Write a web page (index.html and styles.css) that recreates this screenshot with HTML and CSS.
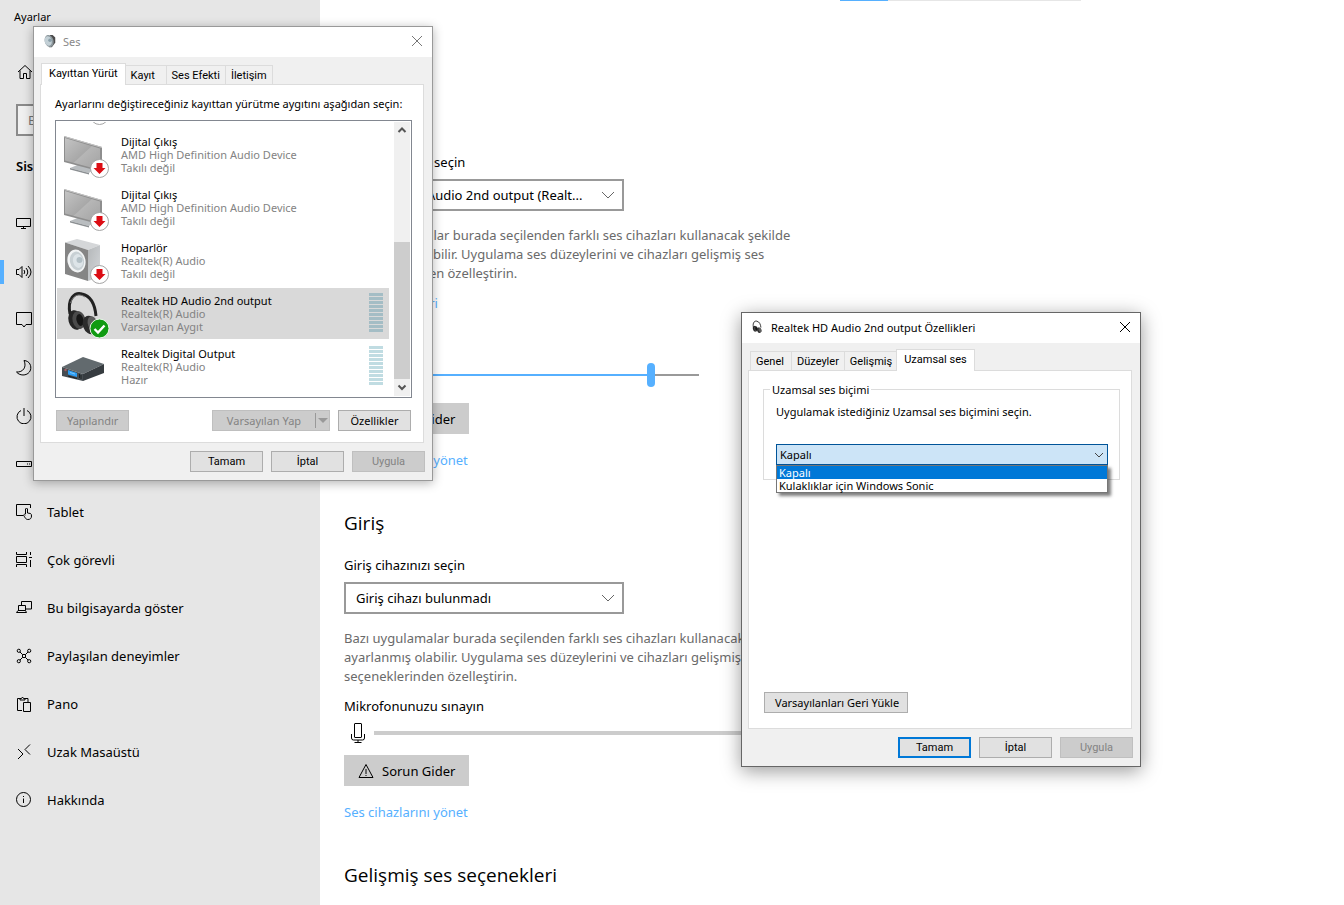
FILE: index.html
```html
<!DOCTYPE html>
<html lang="tr">
<head>
    <meta charset="UTF-8">
    <meta name="viewport" content="width=device-width, initial-scale=1.0">
    <title>Ayarlar</title>
    <link rel="stylesheet" href="styles.css">
</head>
<body>
    <!-- shared device pictures -->
    <svg class="defs" aria-hidden="true">
        <defs>
            <linearGradient id="screen" x1="0" y1="0" x2="1" y2="1">
                <stop offset="0" stop-color="#c4c4c4"/>
                <stop offset="0.5" stop-color="#a8a8a8"/>
                <stop offset="0.52" stop-color="#b6b6b6"/>
                <stop offset="1" stop-color="#a2a2a2"/>
            </linearGradient>
            <linearGradient id="side" x1="0" y1="0" x2="1" y2="1">
                <stop offset="0" stop-color="#b4b7b9"/>
                <stop offset="1" stop-color="#d4d7da"/>
            </linearGradient>
            <symbol id="badge" viewBox="0 0 48 48">
                <circle cx="37.500" cy="37.500" r="9" fill="#fff" stroke="#a5a5a5"/>
                <path d="M34.500 32h6v5h3l-6 6-6-6h3z" fill="#dc0d14"/>
            </symbol>
            <symbol id="monitor" viewBox="0 0 48 48">
                <path d="M8 37l10-4 14 5-5 4z" fill="#b9bdc0"/>
                <path d="M8 37l19 5v1.500L8 38.500z" fill="#8b8f92"/>
                <path d="M2 5l38 11v25L2 31z" fill="#8e8e8e"/>
                <path d="M3 7l35 10.500V39L3 29.500z" fill="url(#screen)"/>
                <path d="M2 5l38 11v1L2 6z" fill="#c7c7c7"/>
            </symbol>
            <symbol id="speaker" viewBox="0 0 48 48">
                <path d="M3 5.500L15 2l23 6-12 5z" fill="#d5d7d9"/>
                <path d="M26 13l12-5v32l-12 4z" fill="url(#side)"/>
                <path d="M3 5.500L26 13v31L3 37z" fill="#858585"/>
                <ellipse cx="14.500" cy="24" rx="9" ry="11.500" transform="rotate(-12 14.500 24)" fill="#f2f4f5"/>
                <ellipse cx="15" cy="24" rx="7" ry="9.500" transform="rotate(-12 15 24)" fill="#c8d0d4"/>
                <ellipse cx="16" cy="24" rx="5" ry="7" transform="rotate(-12 16 24)" fill="#dde4e8"/>
                <circle cx="17.500" cy="23" r="3" fill="#b3c0c6"/>
            </symbol>
            <symbol id="headphones" viewBox="0 0 48 48">
                <path d="M8 24C5 8 13 2 20 4c9 2 13 11 14 22" fill="none" stroke="#222" stroke-width="3"/>
                <path d="M8.500 13C11 5 17 3 23 7" fill="none" stroke="#777" stroke-width="1"/>
                <ellipse cx="13.500" cy="30" rx="7" ry="10" transform="rotate(-14 13.500 30)" fill="#252525"/>
                <ellipse cx="17" cy="30" rx="6.500" ry="9" transform="rotate(-14 17 30)" fill="#4a4a4a"/>
                <ellipse cx="18" cy="30" rx="3.500" ry="6" transform="rotate(-14 18 30)" fill="#161616"/>
                <ellipse cx="28" cy="35" rx="7" ry="9.500" transform="rotate(-20 28 35)" fill="#2c2c2c"/>
                <ellipse cx="31" cy="34" rx="5" ry="8" transform="rotate(-20 31 34)" fill="#5d5d5d"/>
            </symbol>
            <symbol id="check" viewBox="0 0 48 48">
                <circle cx="37.500" cy="38.500" r="9.500" fill="#109b12" stroke="#e9f5e9"/>
                <path d="M32.500 39l3.500 3.500 6.500-7" fill="none" stroke="#fff" stroke-width="2.400"/>
            </symbol>
            <symbol id="amp" viewBox="0 -2 48 48">
                <path d="M0 22l21-10 21 7-21 10z" fill="#626a6e"/>
                <path d="M0 22l21 7v7L0 31z" fill="#454c51"/>
                <path d="M21 29l21-10v9l-21 8z" fill="#363c40"/>
                <path d="M6 25l9 3v4l-9-2.500z" fill="#2b9df4"/>
                <path d="M8 27l5 1.500v1L8 28z" fill="#7cc6fb"/>
                <circle cx="3.500" cy="25" r="1.200" fill="#a35b62"/>
                <path d="M6 31l9 2.500M17.500 29v4M19 30v4" stroke="#1c2023"/>
            </symbol>
        </defs>
    </svg>

    <div class="settings">
        <nav class="sidebar">
            <div class="app-title">Ayarlar</div>
            <a class="home" href="#" aria-label="Giriş">
                <svg viewBox="0 0 16 16"><path d="M1 8L8 1.500 15 8M3 6.500V14.500H6.500V9.500H9.500V14.500H13V6.500"/></svg>
            </a>
            <input class="search" type="text" placeholder="Bir ayar bulun" aria-label="Bir ayar bulun">
            <h2 class="group">Sistem</h2>
            <ul class="menu">
                <li><a href="#">
                    <svg viewBox="0 0 16 16"><path d="M.500 2.500h14v8H.500zM7.500 10.500v2M5 12.500h5"/></svg>
                    Ekran</a></li>
                <li class="active"><a href="#">
                    <svg viewBox="0 0 16 16"><path d="M.500 5.500h2.500l3-3v11l-3-3H.500zM8 6q1.500 2 0 4M10 4q3.500 4 0 8M12 2q6 6 0 12"/></svg>
                    Ses</a></li>
                <li><a href="#">
                    <svg viewBox="0 0 16 16"><path d="M.500.500h15v12H10L8 15 6 12.500H.500z"/></svg>
                    Bildirimler ve eylemler</a></li>
                <li><a href="#">
                    <svg viewBox="0 0 16 16"><path d="M8 .500C14 1 15.500 6 14.500 10 12.500 16 4 16.500.500 12 7 12.500 11 7 8 .500z"/></svg>
                    Odaklanma yardımı</a></li>
                <li><a href="#">
                    <svg viewBox="0 0 16 16"><path d="M5 2.500a7 7 0 1 0 6 0M8 0v8"/></svg>
                    Güç ve uyku</a></li>
                <li><a href="#">
                    <svg viewBox="0 0 16 16"><path d="M.500 5.500h15v5H.500zM11 8h1M13 8h1"/></svg>
                    Depolama</a></li>
                <li><a href="#">
                    <svg viewBox="0 0 16 16"><path d="M7 11.500H.500V.500h14V4M9.500 10V5q1-2 2 0v4l3 .500q1 .500 1 2.500c0 2-1 3.500-3.500 3.500-2 0-2.500-1-4.500-4.500q1-1.500 2 0"/></svg>
                    Tablet</a></li>
                <li><a href="#">
                    <svg viewBox="0 0 16 16"><path d="M.500 0v2.500h10V0M.500 4.500h10v6H.500zM.500 15v-2.500h10V15M14.500 0v3M14.500 8v7M13 5.500h3"/></svg>
                    Çok görevli</a></li>
                <li><a href="#">
                    <svg viewBox="0 0 16 16"><path d="M5.500 5V1.500h10v7.500H10M2.500 10.500V5.500H9.500v5M.500 12.500L2 10.500h7.500l1 2z"/></svg>
                    Bu bilgisayarda göster</a></li>
                <li><a href="#">
                    <svg viewBox="0 0 16 16"><path d="M6.500 6.500h3v3h-3zM4 4l2.500 2.500M12 4L9.500 6.500M4 12l2.500-2.500M12 12L9.500 9.500"/><circle cx="2.800" cy="2.800" r="1.600"/><circle cx="13.200" cy="2.800" r="1.600"/><circle cx="2.800" cy="13.200" r="1.600"/><circle cx="13.200" cy="13.200" r="1.600"/></svg>
                    Paylaşılan deneyimler</a></li>
                <li><a href="#">
                    <svg viewBox="0 0 16 16"><path d="M6 14.500H1.500v-12H4M9 2.500h3V6M4 4V2.500H5.500q1-3 2 0H9V4zM7.500 6.500h7v9h-7z"/></svg>
                    Pano</a></li>
                <li><a href="#">
                    <svg viewBox="0 0 16 16"><path d="M2 5l5 5-5 5M14 .500l-5 5 5 5"/></svg>
                    Uzak Masaüstü</a></li>
                <li><a href="#">
                    <svg viewBox="0 0 16 16"><circle cx="7.500" cy="7.500" r="7"/><path d="M7.500 6.500V11M7.500 4v1"/></svg>
                    Hakkında</a></li>
            </ul>
        </nav>

        <main class="content">
            <div class="loading"><div class="loading-value"></div></div>
            <h1>Ses</h1>

            <h2>Çıkış</h2>
            <label class="label" for="output">Çıkış cihazınızı seçin</label>
            <div class="picker">
                <select id="output"><option>Realtek HD Audio 2nd output (Realt...</option></select>
                <svg viewBox="0 0 12 8"><path d="M0 1l6 6 6-6"/></svg>
            </div>
            <p class="hint">Bazı uygulamalar burada seçilenden farklı ses cihazları kullanacak şekilde ayarlanmış olabilir. Uygulama ses düzeylerini ve cihazları gelişmiş ses seçeneklerinden özelleştirin.</p>
            <a class="link device-link" href="#">Cihaz özellikleri</a>
            <label class="label volume-label" for="volume">Ana ses düzeyi</label>
            <div class="level">
                <svg viewBox="0 0 16 20"><path d="M.500 8h2.500l3-3v10l-3-3H.500zM8 8q1 2 0 4M10 6.500q3 3.500 0 7M12 5q4 5 0 10"/></svg>
                <input id="volume" class="volume" type="range" min="0" max="100" value="86">
            </div>
            <button class="fix" type="button">
                <svg viewBox="0 0 16 16"><path d="M8 1.500L15 14.500H1zM8 6v5M8 12v1"/></svg>
                Sorun Gider
            </button>
            <a class="link" href="#">Ses cihazlarını yönet</a>

            <h2>Giriş</h2>
            <label class="label" for="mic">Giriş cihazınızı seçin</label>
            <div class="picker">
                <select id="mic"><option>Giriş cihazı bulunmadı</option></select>
                <svg viewBox="0 0 12 8"><path d="M0 1l6 6 6-6"/></svg>
            </div>
            <p class="hint">Bazı uygulamalar burada seçilenden farklı ses cihazları kullanacak şekilde ayarlanmış olabilir. Uygulama ses düzeylerini ve cihazları gelişmiş ses seçeneklerinden özelleştirin.</p>
            <div class="label mic-label">Mikrofonunuzu sınayın</div>
            <div class="level">
                <svg class="mic" viewBox="0 0 16 20"><path d="M4.500 1q0-.500.500-.500h6q.500 0 .500.500v13q0 .500-.500.500H5q-.500 0-.500-.500zM1.500 11v4q0 2 2 2h9q2 0 2-2v-4M8 17v2.500M4.500 19.500h7"/></svg>
                <div class="mic-bar"></div>
            </div>
            <button class="fix" type="button">
                <svg viewBox="0 0 16 16"><path d="M8 1.500L15 14.500H1zM8 6v5M8 12v1"/></svg>
                Sorun Gider
            </button>
            <a class="link" href="#">Ses cihazlarını yönet</a>

            <h2>Gelişmiş ses seçenekleri</h2>
        </main>
    </div>

    <!-- Sound window -->
    <section class="dialog sound" aria-label="Ses">
        <header class="titlebar">
            <svg class="title-icon" viewBox="0 0 16 16"><path d="M8 1h3l3 3v6l-4 5H7z" fill="#4b4b4b"/><ellipse cx="7" cy="8" rx="5" ry="7" transform="rotate(-15 7 8)" fill="#8c979c"/><ellipse cx="6" cy="8" rx="4" ry="5.500" transform="rotate(-15 6 8)" fill="#c3d0d6"/><circle cx="8" cy="7" r="2" fill="#8ba0aa"/></svg>
            <span>Ses</span>
            <button class="close" type="button" aria-label="Kapat"><svg viewBox="0 0 12 12"><path d="M1 1l10 10M11 1L1 11"/></svg></button>
        </header>
        <div class="tabs" role="tablist">
            <button class="tab selected" type="button" role="tab">Kayıttan Yürüt</button>
            <button class="tab" type="button" role="tab">Kayıt</button>
            <button class="tab" type="button" role="tab">Ses Efekti</button>
            <button class="tab" type="button" role="tab">İletişim</button>
        </div>
        <div class="panel">
            <p class="intro">Ayarlarını değiştireceğiniz kayıttan yürütme aygıtını aşağıdan seçin:</p>
            <div class="device-box">
                <ul class="devices">
                    <li class="device">
                        <svg viewBox="0 0 48 48"><use href="#monitor"/><use href="#badge"/></svg>
                        <div class="info"><strong>Dijital Çıkış</strong><span>AMD High Definition Audio Device</span><span>Takılı değil</span></div>
                    </li>
                    <li class="device">
                        <svg viewBox="0 0 48 48"><use href="#monitor"/><use href="#badge"/></svg>
                        <div class="info"><strong>Dijital Çıkış</strong><span>AMD High Definition Audio Device</span><span>Takılı değil</span></div>
                    </li>
                    <li class="device">
                        <svg viewBox="0 0 48 48"><use href="#monitor"/><use href="#badge"/></svg>
                        <div class="info"><strong>Dijital Çıkış</strong><span>AMD High Definition Audio Device</span><span>Takılı değil</span></div>
                    </li>
                    <li class="device">
                        <svg viewBox="0 0 48 48"><use href="#speaker"/><use href="#badge"/></svg>
                        <div class="info"><strong>Hoparlör</strong><span>Realtek(R) Audio</span><span>Takılı değil</span></div>
                    </li>
                    <li class="device current">
                        <svg viewBox="0 0 48 48"><use href="#headphones"/><use href="#check"/></svg>
                        <div class="info"><strong>Realtek HD Audio 2nd output</strong><span>Realtek(R) Audio</span><span>Varsayılan Aygıt</span></div>
                        <div class="meter"></div>
                    </li>
                    <li class="device">
                        <svg viewBox="0 0 48 48"><use href="#amp"/></svg>
                        <div class="info"><strong>Realtek Digital Output</strong><span>Realtek(R) Audio</span><span>Hazır</span></div>
                        <div class="meter"></div>
                    </li>
                </ul>
                <div class="scrollbar" aria-hidden="true">
                    <svg viewBox="0 0 16 16"><path d="M4.500 9.500L8 6l3.500 3.500"/></svg>
                    <div class="thumb"></div>
                    <svg viewBox="0 0 16 16"><path d="M4.500 6L8 9.500 11.500 6"/></svg>
                </div>
            </div>
            <div class="actions">
                <button class="btn" type="button" disabled>Yapılandır</button>
                <button class="btn split" type="button" disabled><span>Varsayılan Yap</span><i class="arrow"></i></button>
                <button class="btn" type="button">Özellikler</button>
            </div>
        </div>
        <footer class="footer">
            <button class="btn" type="button">Tamam</button>
            <button class="btn" type="button">İptal</button>
            <button class="btn" type="button" disabled>Uygula</button>
        </footer>
    </section>

    <!-- Device properties window -->
    <section class="dialog props" aria-label="Realtek HD Audio 2nd output Özellikleri">
        <header class="titlebar">
            <svg class="title-icon" viewBox="0 0 48 48"><use href="#headphones"/></svg>
            <span>Realtek HD Audio 2nd output Özellikleri</span>
            <button class="close" type="button" aria-label="Kapat"><svg viewBox="0 0 12 12"><path d="M1 1l10 10M11 1L1 11"/></svg></button>
        </header>
        <div class="tabs" role="tablist">
            <button class="tab" type="button" role="tab">Genel</button>
            <button class="tab" type="button" role="tab">Düzeyler</button>
            <button class="tab" type="button" role="tab">Gelişmiş</button>
            <button class="tab selected" type="button" role="tab">Uzamsal ses</button>
        </div>
        <div class="panel">
            <fieldset class="format">
                <legend>Uzamsal ses biçimi</legend>
                <label for="spatial">Uygulamak istediğiniz Uzamsal ses biçimini seçin.</label>
                <div class="combo">
                    <select id="spatial"><option>Kapalı</option><option>Kulaklıklar için Windows Sonic</option></select>
                    <svg viewBox="0 0 10 6"><path d="M1 1l4 4 4-4"/></svg>
                    <ul class="options" role="listbox">
                        <li class="picked" role="option">Kapalı</li>
                        <li role="option">Kulaklıklar için Windows Sonic</li>
                    </ul>
                </div>
            </fieldset>
            <button class="btn restore" type="button">Varsayılanları Geri Yükle</button>
        </div>
        <footer class="footer">
            <button class="btn default" type="button">Tamam</button>
            <button class="btn" type="button">İptal</button>
            <button class="btn" type="button" disabled>Uygula</button>
        </footer>
    </section>
</body>
</html>
```
FILE: styles.css
```css
* {
    box-sizing: border-box;
}
body {
    margin: 0;
    font-family: "Noto Sans", "Open Sans", sans-serif;
    font-size: 13px;
    color: #000;
    background: #fff;
    height: 100vh;
    overflow: hidden;
}
button, input, select {
    font: inherit;
    color: inherit;
}
ul {
    list-style: none;
    margin: 0;
    padding: 0;
}
svg {
    display: block;
    flex: none;
    fill: none;
}
.defs {
    position: absolute;
    width: 0;
    height: 0;
}

/* Settings window */
.settings {
    display: flex;
    height: 100%;
}
.sidebar {
    width: 320px;
    flex: none;
    background: #e6e6e6;
}
.sidebar svg,
.content svg {
    width: 16px;
    height: 16px;
    stroke: #000;
}
.app-title {
    padding: 8px 14px;
    font-size: 11px;
    line-height: 18px;
}
.home {
    display: flex;
    align-items: center;
    height: 48px;
    margin: 14px 0 8px;
    padding: 0 17px;
}
.search {
    display: block;
    width: 288px;
    height: 32px;
    margin: 0 16px;
    padding: 0 10px;
    border: 2px solid #8a8a8a;
    background: #f0f0f0;
}
.search::placeholder {
    color: #767676;
}
.group {
    margin: 20px 16px 24px;
    font-size: 13px;
    font-weight: 600;
    line-height: 20px;
}
.menu a {
    display: flex;
    align-items: center;
    gap: 15px;
    height: 48px;
    padding: 0 16px;
    color: #000;
    text-decoration: none;
}
.active {
    background: linear-gradient(#56b0ff, #56b0ff) left center / 4px 24px no-repeat;
}
.content {
    flex: 1;
    padding-left: 24px;
}
.loading {
    width: 241px;
    height: 1px;
    margin-left: 496px;
    background: #e6e6e6;
}
.loading-value {
    width: 20%;
    height: 1px;
    background: #56b0ff;
}
h1 {
    margin: 24px 0 33px;
    font-size: 24px;
    font-weight: 400;
    line-height: 48px;
}
.content h2 {
    margin: 39px 0 18px;
    font-family: "Open Sans", "Noto Sans", sans-serif;
    font-size: 19px;
    font-weight: 400;
    line-height: 28px;
}
.content h1 + h2 {
    margin-top: 0;
}
.label {
    display: block;
    line-height: 20px;
}
.picker {
    position: relative;
    width: 280px;
    margin: 7px 0 15px;
}
.picker select {
    display: block;
    width: 100%;
    height: 32px;
    padding: 0 10px;
    border: 2px solid #999;
    border-radius: 0;
    background: #fff;
    appearance: none;
}
.content .picker svg {
    position: absolute;
    right: 10px;
    top: 12px;
    width: 12px;
    height: 8px;
    stroke: #666;
}
.hint {
    max-width: 456px;
    margin: 0 0 10px;
    color: #6a6a6a;
    line-height: 19px;
}
.link {
    display: block;
    width: max-content;
    line-height: 20px;
    color: #56b0ff;
    text-decoration: none;
}
.volume-label {
    margin-top: 25px;
}
.level {
    display: flex;
    align-items: center;
    gap: 8px;
    height: 34px;
    margin-bottom: 5px;
    padding-left: 6px;
}
.level svg {
    height: 20px;
}
.volume {
    width: 325px;
    height: 24px;
    margin: 0;
    background: linear-gradient(to right, #56b0ff 85%, #999 85%) center / 100% 2px no-repeat;
    appearance: none;
}
.volume::-webkit-slider-thumb {
    width: 8px;
    height: 24px;
    border-radius: 4px;
    background: #56b0ff;
    appearance: none;
}
.mic-bar {
    flex: 1;
    max-width: 400px;
    height: 4px;
    background: #ccc;
}
.fix {
    display: flex;
    align-items: center;
    gap: 8px;
    height: 31px;
    margin-bottom: 16px;
    padding: 0 14px;
    border: 0;
    background: #ccc;
}
.volume-label + .level {
    margin-bottom: 11px;
}

/* Classic dialogs */
.dialog {
    position: absolute;
    width: 400px;
    border: 1px solid #999;
    background: #f0f0f0;
    font-size: 11px;
    line-height: 13px;
}
.sound {
    left: 33px;
    top: 26px;
    box-shadow: 0 2px 10px rgba(0, 0, 0, 0.3);
}
.props {
    left: 741px;
    top: 312px;
    border-color: #666;
    box-shadow: 0 4px 18px rgba(0, 0, 0, 0.4);
}
.titlebar {
    display: flex;
    align-items: center;
    gap: 6px;
    height: 30px;
    padding: 0 9px 2px;
    background: #fff;
}
.titlebar span {
    flex: 1;
}
.sound .titlebar span {
    color: #888;
}
.title-icon {
    width: 14px;
    height: 14px;
}
.close {
    padding: 0;
    border: 0;
    background: none;
}
.close svg {
    width: 12px;
    height: 12px;
    stroke: #000;
}
.sound .close svg {
    stroke: #777;
}
.tabs {
    display: flex;
    align-items: flex-end;
    height: 27px;
    padding: 0 8px;
}
.tab,
.footer .btn {
    font-family: Roboto, "Noto Sans", sans-serif;
}
.tab {
    min-width: 42px;
    height: 19px;
    margin-right: -1px;
    padding: 0 5px;
    border: 1px solid #dcdcdc;
    border-bottom: 0;
    background: #f0f0f0;
    text-align: left;
    white-space: nowrap;
}
.tab.selected {
    position: relative;
    height: 22px;
    margin: 0 -1px -1px;
    padding: 0 7px 3px;
    background: #fff;
}
.panel {
    display: flex;
    flex-direction: column;
    height: 359px;
    margin: 0 8px 0 6px;
    padding: 12px 11px 11px 14px;
    border: 1px solid #dcdcdc;
    background: #fff;
}
.intro {
    margin: 0 0 10px;
}
.device-box {
    display: flex;
    height: 278px;
    border: 1px solid #828790;
    padding: 1px;
}
.devices {
    display: flex;
    flex: 1;
    flex-direction: column;
    justify-content: flex-end;
    gap: 2px;
    padding-bottom: 4px;
    overflow: hidden;
}
.device {
    display: flex;
    flex: none;
    gap: 11px;
    height: 51px;
    margin-right: 5px;
    padding: 2px 6px 0 5px;
}
.device svg {
    width: 48px;
    height: 48px;
}
.device.current {
    background: #d9d9d9;
}
.info {
    display: flex;
    flex: 1;
    flex-direction: column;
    padding-top: 4px;
    color: #838383;
}
.info strong {
    color: #000;
    font-weight: 400;
}
.meter {
    width: 14px;
    height: 39px;
    margin-top: 3px;
    background: repeating-linear-gradient(#c0dce2 0 3px, transparent 3px 4px);
}
.current .meter {
    background: repeating-linear-gradient(#a4bdc5 0 3px, transparent 3px 4px);
}
.scrollbar {
    display: flex;
    flex-direction: column;
    width: 16px;
    background: #f0f0f0;
}
.scrollbar svg {
    width: 16px;
    height: 17px;
    stroke: #555;
    stroke-width: 2;
}
.thumb {
    height: 137px;
    margin-top: auto;
    background: #cdcdcd;
}
.actions {
    display: flex;
    gap: 8px;
    margin-top: 12px;
    padding: 0 1px;
}
.btn {
    min-width: 73px;
    height: 21px;
    padding: 0 10px;
    border: 1px solid #adadad;
    background: #e1e1e1;
    white-space: nowrap;
}
.btn:disabled {
    border-color: #bfbfbf;
    background: #ccc;
    color: #838383;
}
.btn.default {
    border: 2px solid #0078d7;
}
.split {
    display: flex;
    align-items: center;
    width: 118px;
    margin-left: auto;
    padding: 0;
}
.split span {
    flex: 1;
}
.arrow {
    display: flex;
    width: 14px;
    height: 15px;
    align-items: center;
    justify-content: center;
    border-left: 1px solid #999;
}
.arrow::before {
    content: "";
    border: 5px solid transparent;
    border-top: 5px solid #999;
    border-bottom: 0;
}
.footer {
    display: flex;
    justify-content: flex-end;
    gap: 8px;
    padding: 8px 7px;
}

/* Spatial sound tab */
.format {
    height: 97px;
    margin: 0;
    padding: 9px 11px 9px 12px;
    border: 1px solid #dcdcdc;
}
.format legend {
    padding: 0 2px;
    margin-left: -6px;
}
.format label {
    display: block;
}
.combo {
    position: relative;
    margin-top: 26px;
}
.combo select {
    display: block;
    width: 100%;
    height: 21px;
    padding: 0 3px;
    border: 1px solid #005499;
    border-radius: 0;
    background: #cce4f7;
    appearance: none;
}
.combo svg {
    position: absolute;
    right: 4px;
    top: 8px;
    width: 10px;
    height: 6px;
    stroke: #444;
}
.options {
    position: absolute;
    left: 0;
    right: 0;
    top: 21px;
    border: 1px solid #777;
    background: #fff;
    box-shadow: 3px 3px 3px rgba(0, 0, 0, 0.5);
}
.options li {
    padding: 0 2px;
}
.options .picked {
    background: #0078d7;
    color: #fff;
}
.restore {
    align-self: flex-start;
    width: 144px;
    margin: auto 1px 4px;
}
```
